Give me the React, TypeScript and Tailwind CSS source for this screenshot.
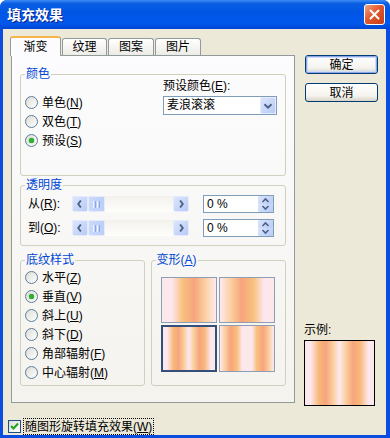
import type { ReactNode } from "react"

const wheat =
  "bg-[linear-gradient(to_right,#fbe9e9_0%,#fee7f0_18%,#f8c17e_38%,#f7a47c_60%,#fbd0a0_80%,#fee9f0_100%)]"
const wheatRev =
  "bg-[linear-gradient(to_right,#fee9f0_0%,#fbd0a0_20%,#f7a47c_40%,#f8c17e_62%,#fee7f0_82%,#fbe9e9_100%)]"
const wheatMirror =
  "bg-[linear-gradient(to_right,#fbe9e9_0%,#fee7f0_8%,#f8b97a_20%,#f7a47c_30%,#fbd0a0_41%,#fee9f0_50%,#fbd0a0_59%,#f7a47c_70%,#f8b97a_80%,#fee7f0_92%,#fbe9e9_100%)]"
const wheatMirrorRev =
  "bg-[linear-gradient(to_right,#fee9f0_0%,#fbd0a0_9%,#f7a47c_20%,#f8c17e_32%,#fee7f0_41%,#fbe9e9_50%,#fee7f0_59%,#f8c17e_68%,#f7a47c_80%,#fbd0a0_91%,#fee9f0_100%)]"

function Acc({ text, k, colon }: { text: string; k: string; colon?: boolean }) {
  return (
    <>
      {text}(<span className="underline underline-offset-[1px]">{k}</span>){colon ? ":" : ""}
    </>
  )
}

function Radio({ checked, children }: { checked?: boolean; children: ReactNode }) {
  return (
    <div className="flex items-center h-[19px] gap-[4px]">
      <span className="flex items-center justify-center w-[13px] h-[13px] shrink-0 rounded-full border border-[#5f7d99] bg-[linear-gradient(135deg,#dcdcd7,#ffffff)]">
        {checked && <span className="w-[5px] h-[5px] rounded-full bg-[#2db22d] shadow-[0_0_1px_#0e7a0e]" />}
      </span>
      <span className="leading-[12px] whitespace-nowrap">{children}</span>
    </div>
  )
}

function Group({ title, className, children }: { title: ReactNode; className: string; children: ReactNode }) {
  return (
    <fieldset className={`border border-[#d0d0bf] rounded-[3px] pl-[4px] ${className}`}>
      <legend className="px-[1px] leading-[12px] text-[#0046d5]">{title}</legend>
      {children}
    </fieldset>
  )
}

function Chevron({ dir }: { dir: "left" | "right" | "down" | "up" }) {
  const pts = {
    left: "9,4 6,8 9,12",
    right: "7,4 10,8 7,12",
    down: "4,6 8,10 12,6",
    up: "4,10 8,6 12,10",
  }[dir]
  return (
    <svg width="16" height="16" viewBox="0 0 16 16">
      <polyline points={pts} fill="none" stroke="#4d6185" strokeWidth="2.2" />
    </svg>
  )
}

function ScrollBtn({ dir }: { dir: "left" | "right" }) {
  return (
    <div className="w-[16px] h-[16px] flex items-center justify-center rounded-[2px] border border-[#e4ebfd] bg-[linear-gradient(135deg,#dbe5fd,#b8cbf6)]">
      <Chevron dir={dir} />
    </div>
  )
}

function Slider() {
  return (
    <div className="flex w-[117px] h-[16px] bg-[linear-gradient(to_bottom,#f3f1ec,#fefefb)]">
      <ScrollBtn dir="left" />
      <div className="w-[17px] h-[16px] flex items-center justify-center gap-[1px] rounded-[2px] border border-[#e4ebfd] bg-[linear-gradient(to_right,#cbd9fc,#bccff7)]">
        <span className="w-px h-[7px] bg-[#eef3fe]" />
        <span className="w-px h-[7px] bg-[#8ca6e4]" />
        <span className="w-px h-[7px] bg-[#eef3fe]" />
        <span className="w-px h-[7px] bg-[#8ca6e4]" />
      </div>
      <div className="flex-1" />
      <ScrollBtn dir="right" />
    </div>
  )
}

function PercentBox() {
  return (
    <div className="ml-[14px] flex w-[71px] h-[18px] border border-[#7f9db9] bg-white">
      <span className="flex-1 pl-[3px] leading-[16px]">0 %</span>
      <div className="w-[15px] flex flex-col">
        <div className="flex-1 flex items-center justify-center rounded-[1px] bg-[linear-gradient(135deg,#dbe5fd,#b8cbf6)] overflow-hidden">
          <svg width="9" height="6" viewBox="0 0 9 6">
            <polyline points="1.5,5 4.5,2 7.5,5" fill="none" stroke="#4d6185" strokeWidth="1.6" />
          </svg>
        </div>
        <div className="flex-1 flex items-center justify-center rounded-[1px] bg-[linear-gradient(135deg,#dbe5fd,#b8cbf6)] overflow-hidden">
          <svg width="9" height="6" viewBox="0 0 9 6">
            <polyline points="1.5,1 4.5,4 7.5,1" fill="none" stroke="#4d6185" strokeWidth="1.6" />
          </svg>
        </div>
      </div>
    </div>
  )
}

function XpButton({ label, isDefault }: { label: string; isDefault?: boolean }) {
  return (
    <div className="w-[73px] h-[19px] rounded-[3px] border border-[#003c74] bg-[linear-gradient(to_bottom,#ffffff,#f4f3ee_70%,#d8d2c6)]">
      <div
        className={`h-full flex items-center justify-center rounded-[2px] leading-[12px] ${
          isDefault ? "border border-[#8ca6e8] shadow-[inset_0_0_0_1px_#cfdcf8]" : ""
        }`}
      >
        {label}
      </div>
    </div>
  )
}

export default function App() {
  return (
    <div className="w-[390px] h-[438px] flex flex-col bg-[#0a4ddf] rounded-t-[7px] overflow-hidden text-[12px] text-black font-['Liberation_Sans','Noto_Sans_CJK_SC',sans-serif]">
      {/* title bar */}
      <div className="h-[29px] shrink-0 flex items-center justify-between pl-[7px] pr-[5px] bg-[linear-gradient(to_bottom,#3d8df5_0%,#0a5fe3_12%,#0055e5_45%,#0058eb_80%,#0146d4_100%)]">
        <span className="text-white font-bold text-[14px] leading-[16px] [text-shadow:1px_1px_#0a1f8a]">填充效果</span>
        <div className="w-[21px] h-[21px] flex items-center justify-center rounded-[3px] border border-white bg-[linear-gradient(135deg,#f2a486,#e2582f_45%,#c53b14)]">
          <svg width="11" height="11" viewBox="0 0 11 11">
            <path d="M1.5 1.5 L9.5 9.5 M9.5 1.5 L1.5 9.5" stroke="#fff" strokeWidth="2" strokeLinecap="round" />
          </svg>
        </div>
      </div>

      {/* body */}
      <div className="flex-1 flex flex-col ml-[3px] mr-[4px] mb-[3px] bg-[#ece9d8]">
        <div className="flex pt-[7px]">
          <div className="pl-[8px]">
            {/* tabs */}
            <div className="flex items-end h-[20px] -mb-px">
              <div className="relative z-10 -ml-px w-[51px] h-[20px] flex items-center justify-center rounded-t-[3px] border-x border-[#919b9c] border-t-2 border-t-[#f5b34a] bg-[#fcfcfe] leading-[12px]">
                渐变
              </div>
              <div className="ml-px mb-px w-[45px] h-[17px] flex items-center justify-center rounded-t-[3px] border-x border-t border-[#919b9c] bg-[linear-gradient(to_bottom,#ffffff,#ecebe6)] leading-[12px]">
                纹理
              </div>
              <div className="ml-px mb-px w-[46px] h-[17px] flex items-center justify-center rounded-t-[3px] border-x border-t border-[#919b9c] bg-[linear-gradient(to_bottom,#ffffff,#ecebe6)] leading-[12px]">
                图案
              </div>
              <div className="ml-px mb-px w-[46px] h-[17px] flex items-center justify-center rounded-t-[3px] border-x border-t border-[#919b9c] bg-[linear-gradient(to_bottom,#ffffff,#ecebe6)] leading-[12px]">
                图片
              </div>
            </div>

            {/* tab panel */}
            <div className="w-[284px] h-[348px] border border-[#919b9c] bg-[linear-gradient(to_bottom,#fcfcfe,#f4f3ee)] px-[8px] pt-[12px]">
              <Group title="颜色" className="h-[108px]">
                <div className="flex">
                  <div className="w-[138px] pt-[13px]">
                    <Radio>
                      <Acc text="单色" k="N" />
                    </Radio>
                    <Radio>
                      <Acc text="双色" k="T" />
                    </Radio>
                    <Radio checked>
                      <Acc text="预设" k="S" />
                    </Radio>
                  </div>
                  <div>
                    <div className="leading-[12px]">
                      <Acc text="预设颜色" k="E" colon />
                    </div>
                    <div className="mt-[4px] w-[114px] h-[19px] flex border border-[#7f9db9] bg-white">
                      <span className="flex-1 pl-[3px] leading-[17px]">麦浪滚滚</span>
                      <div className="w-[16px] h-[17px] flex items-center justify-center rounded-[2px] border border-[#e4ebfd] bg-[linear-gradient(135deg,#dbe5fd,#b8cbf6)]">
                        <Chevron dir="down" />
                      </div>
                    </div>
                  </div>
                </div>
              </Group>

              <Group title="透明度" className="mt-[3px] h-[67px]">
                <div className="pt-[3px] pl-[3px] flex flex-col gap-[4px]">
                  <div className="flex items-center h-[20px]">
                    <span className="w-[44px] leading-[12px]">
                      <Acc text="从" k="R" colon />
                    </span>
                    <Slider />
                    <PercentBox />
                  </div>
                  <div className="flex items-center h-[20px]">
                    <span className="w-[44px] leading-[12px]">
                      <Acc text="到" k="O" colon />
                    </span>
                    <Slider />
                    <PercentBox />
                  </div>
                </div>
              </Group>

              <div className="mt-[8px] flex gap-[6px]">
                <Group title="底纹样式" className="w-[125px] h-[132px]">
                  <div className="pt-[2px]">
                    <Radio>
                      <Acc text="水平" k="Z" />
                    </Radio>
                    <Radio checked>
                      <Acc text="垂直" k="V" />
                    </Radio>
                    <Radio>
                      <Acc text="斜上" k="U" />
                    </Radio>
                    <Radio>
                      <Acc text="斜下" k="D" />
                    </Radio>
                    <Radio>
                      <Acc text="角部辐射" k="F" />
                    </Radio>
                    <Radio>
                      <Acc text="中心辐射" k="M" />
                    </Radio>
                  </div>
                </Group>
                <Group title={<Acc text="变形" k="A" />} className="w-[136px] h-[132px]">
                  <div className="pl-[5px] pt-[11px] grid grid-cols-[56px_56px] gap-[2px]">
                    <div className={`h-[46px] border border-[#8d9db3] ${wheat}`} />
                    <div className={`h-[46px] border border-[#8d9db3] ${wheatRev}`} />
                    <div className={`h-[47px] border-2 border-[#34507a] ${wheatMirror}`} />
                    <div className={`h-[47px] border border-[#8d9db3] ${wheatMirrorRev}`} />
                  </div>
                </Group>
              </div>
            </div>
          </div>

          {/* right column */}
          <div className="ml-[10px] pt-[19px] flex flex-col">
            <XpButton label="确定" isDefault />
            <div className="mt-[9px]">
              <XpButton label="取消" />
            </div>
            <div className="mt-[222px] -ml-px leading-[12px]">示例:</div>
            <div className={`mt-[4px] -ml-px w-[71px] h-[66px] border border-black ${wheatMirror}`} />
          </div>
        </div>

        {/* bottom checkbox */}
        <div className="mt-[12px] pl-[5px] h-[17px] flex items-center gap-[2px]">
          <span className="w-[13px] h-[13px] flex items-center justify-center border border-[#1c5180] bg-[linear-gradient(135deg,#dcdcd7,#ffffff)]">
            <svg width="9" height="9" viewBox="0 0 9 9">
              <polyline points="1,4 3.5,6.5 8,1.5" fill="none" stroke="#21a121" strokeWidth="2" />
            </svg>
          </span>
          <span className="h-[17px] px-[1px] flex items-center border border-dotted border-black leading-[12px]">
            <Acc text="随图形旋转填充效果" k="W" />
          </span>
        </div>
      </div>
    </div>
  )
}
